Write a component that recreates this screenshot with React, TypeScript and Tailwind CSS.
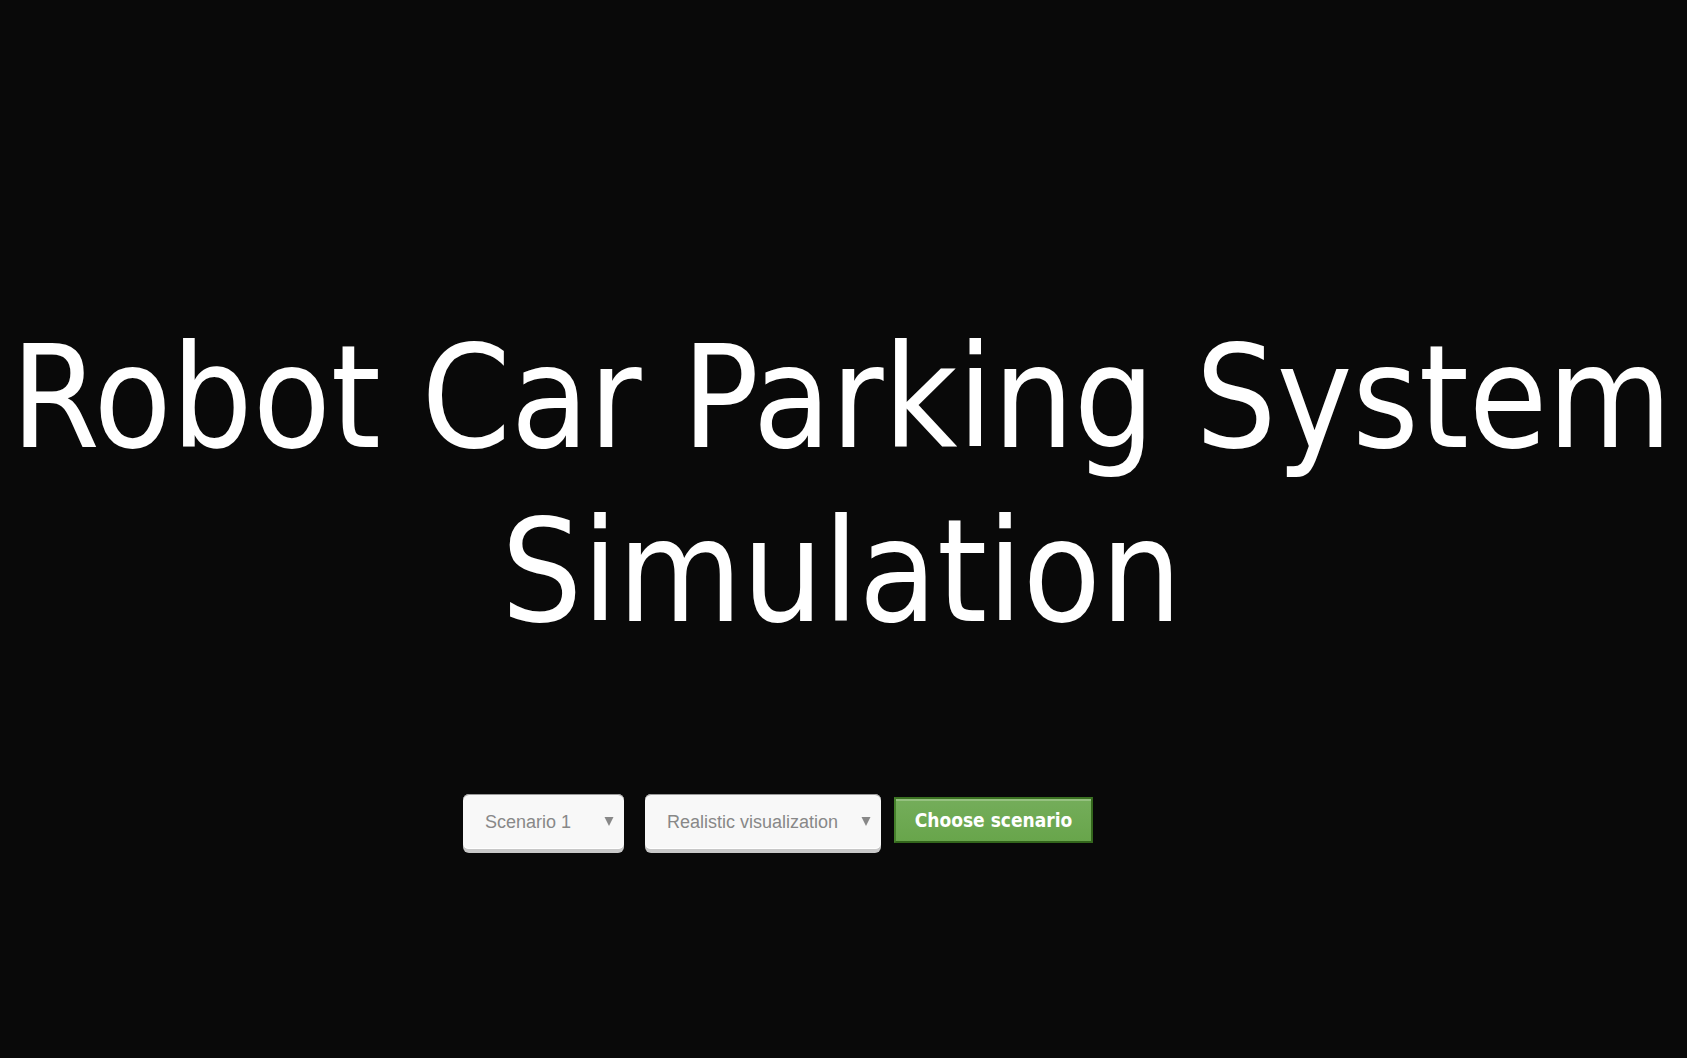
type PickerProps = { label: string; width: string; options: string[] };

function Picker({ label, width, options }: PickerProps) {
  return (
    <div className={`relative ${width}`}>
      <select
        aria-label={label}
        className="block h-[55px] w-full appearance-none rounded-md bg-[#f8f8f8] pt-[2px] pr-8 pl-[22px] font-['Liberation_Sans',sans-serif] text-[18px] text-[#888] shadow-[0_4px_0_#c8c8c8,inset_0_-1px_#fff,inset_0_1px_#999]"
      >
        {options.map((option) => (
          <option key={option}>{option}</option>
        ))}
      </select>
      <svg aria-hidden="true" viewBox="0 0 10 10" className="pointer-events-none absolute top-[22px] right-[10px] size-[10px] fill-[#888]">
        <path d="M0.5 1H9.5L5 10Z" />
      </svg>
    </div>
  );
}

export default function App() {
  return (
    <main className="min-h-screen bg-[#090909] pt-[311px] font-['DejaVu_Sans_Condensed','DejaVu_Sans',sans-serif]">
      <h1 className="pr-1 text-center text-[142px] leading-[174px] text-white">
        Robot Car Parking System
        <br />
        Simulation
      </h1>
      <form className="mt-[135px] flex items-start pl-[463px]" onSubmit={(e) => e.preventDefault()}>
        <Picker label="Scenario" width="w-[161px] mr-[21px]" options={['Scenario 1']} />
        <Picker label="Visualization" width="w-[236px] mr-[13px]" options={['Realistic visualization']} />
        <button className="mt-[3px] h-[46px] w-[199px] border-2 border-t-[#3b7222] border-r-[#33661c] border-b-[#33661c] border-l-[#45802b] bg-linear-to-b from-[#74ad5a] to-[#68a54b] text-[19px] font-bold whitespace-nowrap text-white shadow-[inset_0_2px_#95c17f]">
          Choose scenario
        </button>
      </form>
    </main>
  );
}
